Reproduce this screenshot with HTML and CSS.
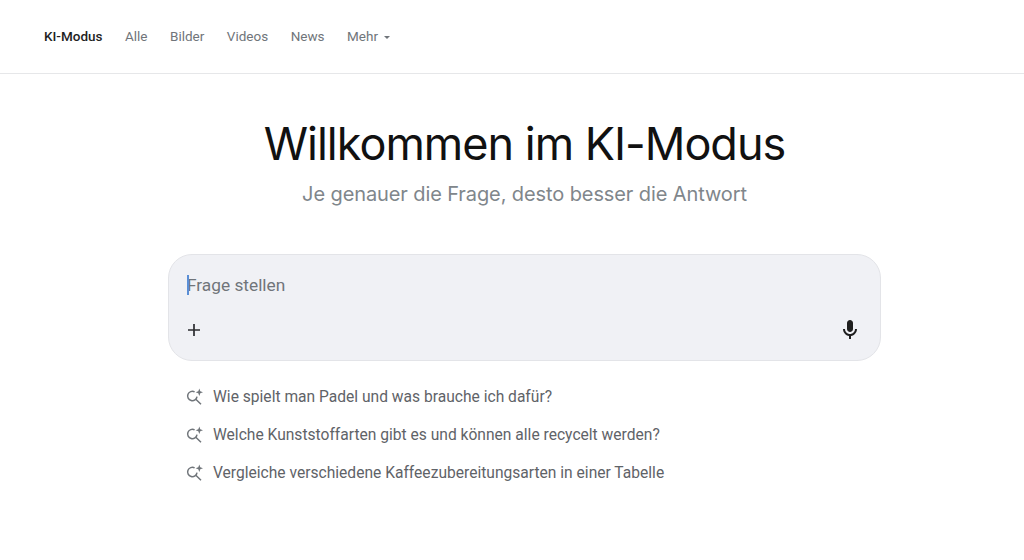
FILE: index.html
```html
<!DOCTYPE html>
<html lang="de">
<head>
  <meta charset="UTF-8">
  <title>KI-Modus</title>
  <link rel="stylesheet" href="styles.css">
</head>
<body>
  <nav class="topnav">
    <a class="tab active">KI-Modus</a>
    <a class="tab">Alle</a>
    <a class="tab">Bilder</a>
    <a class="tab">Videos</a>
    <a class="tab">News</a>
    <a class="tab more">Mehr <span class="caret"></span></a>
  </nav>

  <main class="content">
    <h1>Willkommen im KI-Modus</h1>
    <p class="subtitle">Je genauer die Frage, desto besser die Antwort</p>

    <div class="searchbox">
      <div class="prompt"><span class="cursor"></span>Frage stellen</div>
      <div class="tools">
        <svg class="plus" width="14" height="14" viewBox="0 0 14 14"><path d="M7 1v12M1 7h12" stroke="#2b2c2f" stroke-width="1.7" fill="none"/></svg>
        <svg class="mic" width="24" height="24" viewBox="0 0 24 24"><path fill="#1f1f1f" d="M12 14c1.66 0 3-1.34 3-3V5c0-1.66-1.34-3-3-3S9 3.34 9 5v6c0 1.66 1.34 3 3 3z"/><path fill="#1f1f1f" d="M17 11c0 2.76-2.24 5-5 5s-5-2.24-5-5H5c0 3.53 2.61 6.43 6 6.92V21h2v-3.08c3.39-.49 6-3.39 6-6.92h-2z"/></svg>
      </div>
    </div>

    <ul class="suggestions">
      <li>
        <svg class="spark" width="18" height="18" viewBox="0 0 18 18"><path d="M8.6 3.9A4.7 4.7 0 1 0 11 8.6M9.8 11.3l5.2 5" stroke="#70757a" stroke-width="1.5" fill="none"/><path d="M13.3 .6l1 2.7 2.7 1-2.7 1-1 2.7-1-2.7-2.7-1 2.7-1z" fill="#70757a"/></svg>
        Wie spielt man Padel und was brauche ich dafür?
      </li>
      <li>
        <svg class="spark" width="18" height="18" viewBox="0 0 18 18"><path d="M8.6 3.9A4.7 4.7 0 1 0 11 8.6M9.8 11.3l5.2 5" stroke="#70757a" stroke-width="1.5" fill="none"/><path d="M13.3 .6l1 2.7 2.7 1-2.7 1-1 2.7-1-2.7-2.7-1 2.7-1z" fill="#70757a"/></svg>
        Welche Kunststoffarten gibt es und können alle recycelt werden?
      </li>
      <li>
        <svg class="spark" width="18" height="18" viewBox="0 0 18 18"><path d="M8.6 3.9A4.7 4.7 0 1 0 11 8.6M9.8 11.3l5.2 5" stroke="#70757a" stroke-width="1.5" fill="none"/><path d="M13.3 .6l1 2.7 2.7 1-2.7 1-1 2.7-1-2.7-2.7-1 2.7-1z" fill="#70757a"/></svg>
        Vergleiche verschiedene Kaffeezubereitungsarten in einer Tabelle
      </li>
    </ul>
  </main>
</body>
</html>
```

FILE: styles.css
```css
body {
  margin: 0;
  height: 560px;
  overflow: hidden;
  background: #fff;
  font-family: Roboto, "Liberation Sans", sans-serif;
  color: #1f1f1f;
}
.topnav {
  display: flex;
  align-items: center;
  gap: 22.5px;
  height: 72px;
  padding: 0 0 1px 44px;
  border-bottom: 1px solid #e6e7e9;
  font-size: 13.5px;
}
.tab {
  color: #70757a;
}
.tab.active {
  color: #1f1f1f;
  font-weight: 500;
}
.caret {
  display: inline-block;
  margin-left: 3px;
  vertical-align: middle;
  border-left: 3.5px solid transparent;
  border-right: 3.5px solid transparent;
  border-top: 3.5px solid #70757a;
}
.content {
  display: flex;
  flex-direction: column;
  align-items: center;
  padding-left: 25px;
}
h1 {
  margin: 42px 0 0;
  font-size: 45px;
  line-height: 56px;
  font-weight: 400;
  color: #111;
  font-family: Inter, Roboto, sans-serif;
  letter-spacing: -1px;
}
.subtitle {
  margin: 6px 0 0;
  font-size: 20px;
  line-height: 32px;
  color: #80868b;
  font-family: Inter, Roboto, sans-serif;
  letter-spacing: -0.1px;
}
.searchbox {
  box-sizing: border-box;
  width: 713px;
  height: 107px;
  margin-top: 44px;
  padding: 18px 18px 0 18px;
  background: #f0f1f5;
  border: 1px solid #e3e4e8;
  border-radius: 24px;
}
.prompt {
  position: relative;
  font-size: 17.3px;
  line-height: 24px;
  color: #70757a;
}
.cursor {
  position: absolute;
  left: 0;
  top: 2px;
  width: 2px;
  height: 20px;
  background: #5b8fd6;
}
.tools {
  display: flex;
  align-items: center;
  justify-content: space-between;
  margin-top: 21px;
}
.suggestions {
  width: 713px;
  box-sizing: border-box;
  margin: 17px 0 0;
  padding: 0 0 0 18px;
  list-style: none;
}
.suggestions li {
  display: flex;
  align-items: center;
  gap: 9px;
  height: 38px;
  font-size: 15.6px;
  color: #5f6368;
}
```
